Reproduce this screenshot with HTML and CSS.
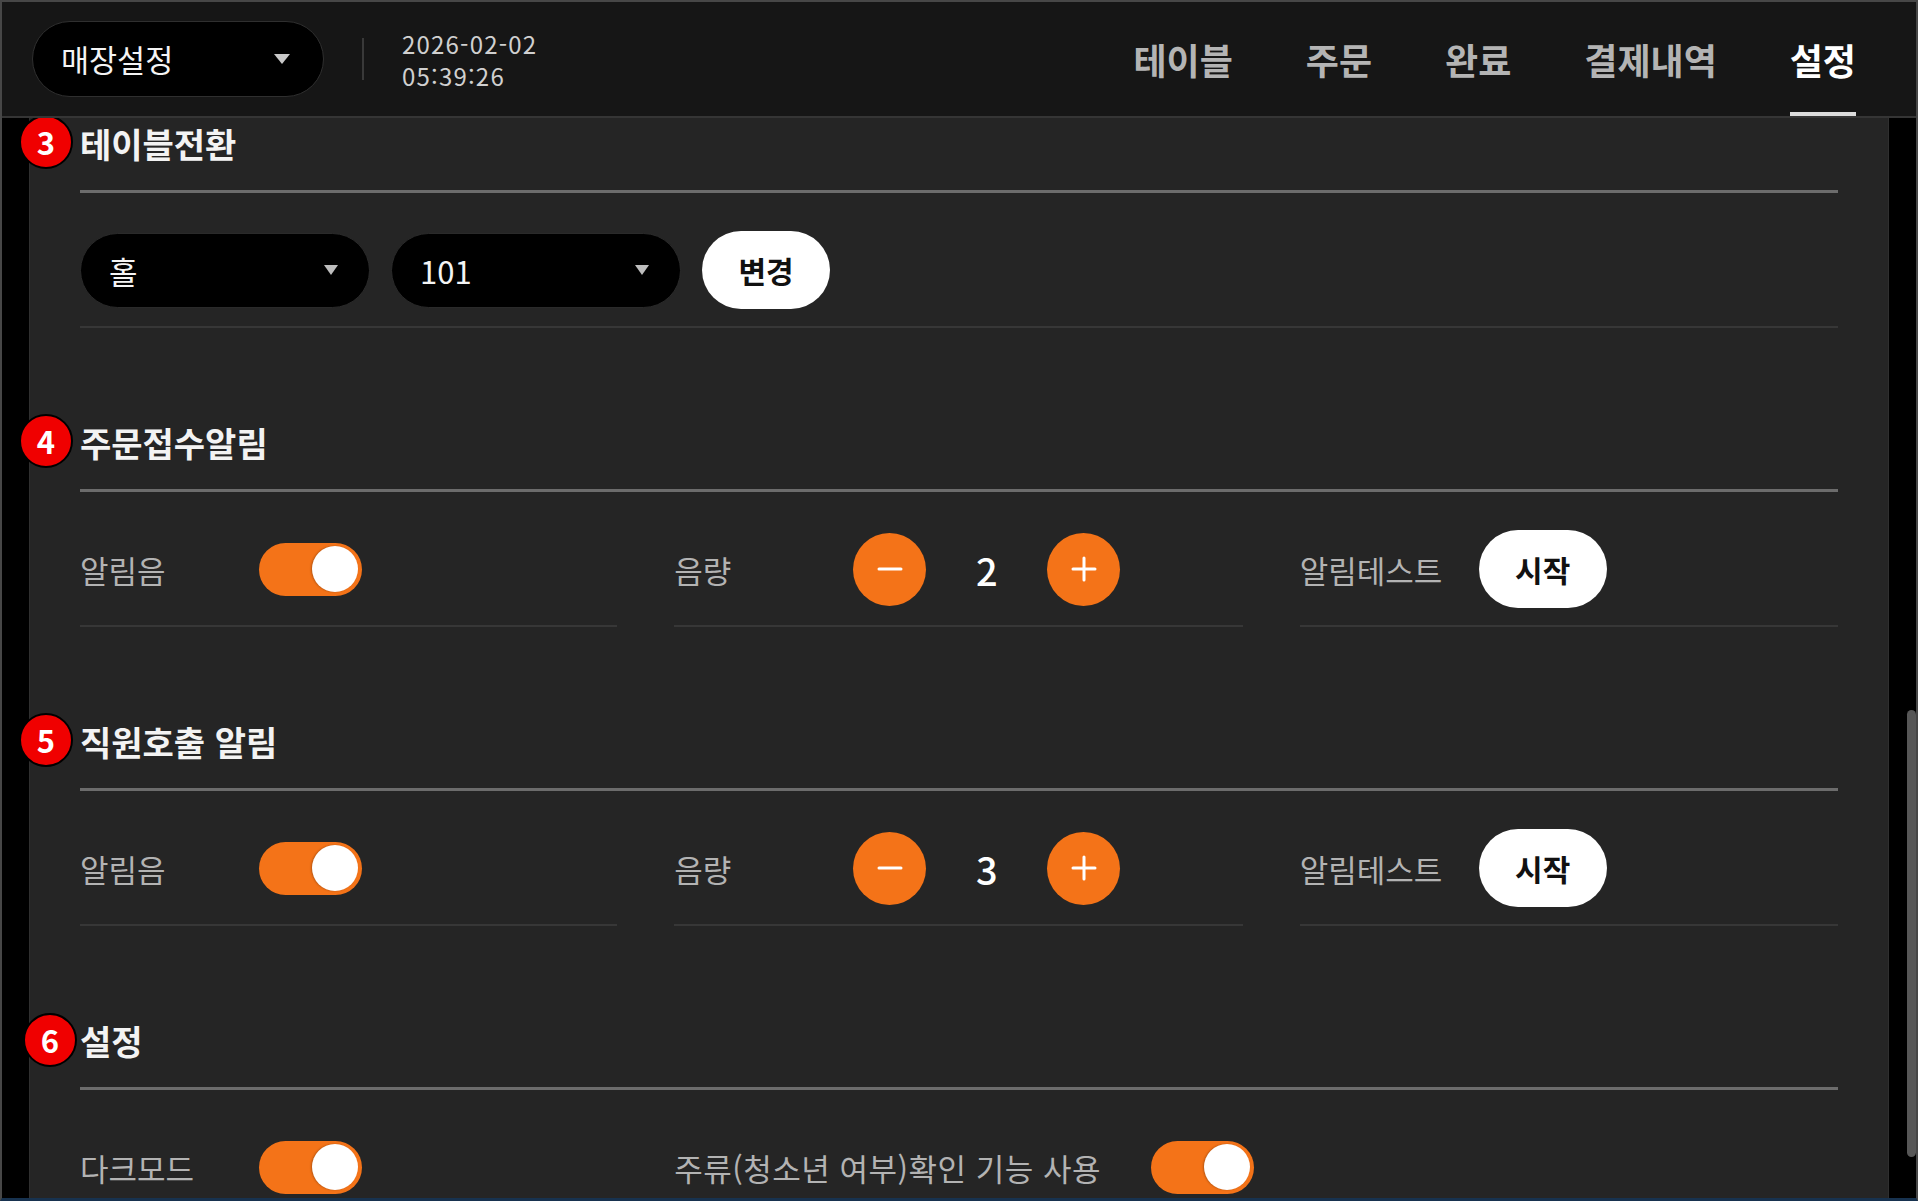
FILE: index.html
```html
<!DOCTYPE html>
<html lang="ko">
<head>
<meta charset="utf-8">
<title>설정</title>
<link rel="stylesheet" href="styles.css">
</head>
<body>
<div class="frame">
  <header class="topbar">
    <div class="store-select">
      <span>매장설정</span>
      <span class="caret"></span>
    </div>
    <div class="vsep"></div>
    <div class="clock">
      <div>2026-02-02</div>
      <div>05:39:26</div>
    </div>
    <nav class="tabs">
      <a class="tab">테이블</a>
      <a class="tab">주문</a>
      <a class="tab">완료</a>
      <a class="tab">결제내역</a>
      <a class="tab active">설정</a>
    </nav>
  </header>

  <div class="body">
    <div class="gutter-left"></div>
    <main class="panel">
      <section class="section">
        <h2 class="section-title"><span class="badge">3</span>테이블전환</h2>
        <div class="flat-row">
          <div class="select"><span>홀</span><span class="caret small"></span></div>
          <div class="select"><span>101</span><span class="caret small"></span></div>
          <button class="pill-btn">변경</button>
        </div>
      </section>

      <section class="section">
        <h2 class="section-title"><span class="badge">4</span>주문접수알림</h2>
        <div class="grid-row">
          <div class="cell">
            <span class="label">알림음</span>
            <span class="toggle"><span class="knob"></span></span>
          </div>
          <div class="cell">
            <span class="label">음량</span>
            <div class="stepper">
              <span class="round-btn"><svg width="26" height="26" viewBox="0 0 26 26"><path d="M2 13h22" stroke="#fff" stroke-width="3" stroke-linecap="round"/></svg></span>
              <span class="value">2</span>
              <span class="round-btn"><svg width="26" height="26" viewBox="0 0 26 26"><path d="M2 13h22M13 2v22" stroke="#fff" stroke-width="3" stroke-linecap="round"/></svg></span>
            </div>
          </div>
          <div class="cell">
            <span class="label">알림테스트</span>
            <button class="pill-btn">시작</button>
          </div>
        </div>
      </section>

      <section class="section">
        <h2 class="section-title"><span class="badge">5</span>직원호출 알림</h2>
        <div class="grid-row">
          <div class="cell">
            <span class="label">알림음</span>
            <span class="toggle"><span class="knob"></span></span>
          </div>
          <div class="cell">
            <span class="label">음량</span>
            <div class="stepper">
              <span class="round-btn"><svg width="26" height="26" viewBox="0 0 26 26"><path d="M2 13h22" stroke="#fff" stroke-width="3" stroke-linecap="round"/></svg></span>
              <span class="value">3</span>
              <span class="round-btn"><svg width="26" height="26" viewBox="0 0 26 26"><path d="M2 13h22M13 2v22" stroke="#fff" stroke-width="3" stroke-linecap="round"/></svg></span>
            </div>
          </div>
          <div class="cell">
            <span class="label">알림테스트</span>
            <button class="pill-btn">시작</button>
          </div>
        </div>
      </section>

      <section class="section">
        <h2 class="section-title"><span class="badge badge-shift">6</span>설정</h2>
        <div class="grid-row">
          <div class="cell">
            <span class="label">다크모드</span>
            <span class="toggle"><span class="knob"></span></span>
          </div>
          <div class="cell">
            <span class="label label-long">주류(청소년 여부)확인 기능 사용</span>
            <span class="toggle"><span class="knob"></span></span>
          </div>
          <div class="cell"></div>
        </div>
      </section>
    </main>
    <div class="gutter-right"><div class="thumb"></div></div>
  </div>
</div>
</body>
</html>
```

FILE: styles.css
```css
html, body {
  margin: 0;
  padding: 0;
  background: #000;
}

.frame {
  width: 1918px;
  height: 1201px;
  box-sizing: border-box;
  border: 2px solid #474747;
  border-bottom: 3px solid #17324f;
  display: flex;
  flex-direction: column;
  overflow: hidden;
  font-family: "Noto Sans CJK KR", "Noto Sans", sans-serif;
  color: #fff;
}

/* ---------- header ---------- */
.topbar {
  height: 116px;
  flex: none;
  box-sizing: border-box;
  background: #161616;
  border-bottom: 2px solid #353535;
  display: flex;
  align-items: center;
  padding: 0 60px 0 30px;
}

.store-select {
  width: 292px;
  height: 76px;
  box-sizing: border-box;
  background: #000;
  border: 1px solid #2f2f2f;
  border-radius: 38px;
  display: flex;
  align-items: center;
  justify-content: space-between;
  padding: 0 33px 0 28px;
  font-size: 30.5px;
  color: #f4f4f4;
}

.caret {
  width: 0;
  height: 0;
  border-left: 8px solid transparent;
  border-right: 8px solid transparent;
  border-top: 10px solid #c9c9c9;
}

.caret.small {
  border-left-width: 7.5px;
  border-right-width: 7.5px;
  border-top: 10px solid #bdbdbd;
}

.vsep {
  width: 2px;
  height: 42px;
  background: #393939;
  margin: 0 38px 0 38px;
}

.clock {
  font-size: 24px;
  line-height: 32px;
  letter-spacing: 1.2px;
  color: #d0d0d0;
  padding-top: 2px;
}

.tabs {
  margin-left: auto;
  align-self: stretch;
  display: flex;
  gap: 73px;
}

.tab {
  display: flex;
  align-items: center;
  box-sizing: border-box;
  padding-top: 4px;
  border-bottom: 4px solid transparent;
  font-size: 36px;
  font-weight: 700;
  color: #b4b4b4;
}

.tab.active {
  color: #fff;
  border-bottom-color: #dcdcdc;
}

/* ---------- body ---------- */
.body {
  flex: 1;
  min-height: 0;
  display: flex;
  overflow: hidden;
}

.gutter-left {
  width: 27px;
  flex: none;
  background: #000;
  border-right: 1px solid #2f2f2f;
}

.panel {
  flex: 1;
  background: #252525;
  padding: 4px 50px 0 50px;
  box-sizing: border-box;
}

.gutter-right {
  width: 28px;
  flex: none;
  background: #000;
  border-left: 1px solid #2f2f2f;
  box-sizing: border-box;
  display: flex;
  justify-content: flex-end;
}

.thumb {
  width: 9px;
  height: 447px;
  margin-top: 592px;
  background: #575757;
  border-radius: 5px;
}

/* ---------- sections ---------- */
.section {
  margin-bottom: 93px;
}

.section-title {
  position: relative;
  margin: 0;
  font-size: 34px;
  font-weight: 700;
  line-height: 44px;
  color: #f3f3f3;
  padding-bottom: 24px;
  border-bottom: 3px solid #6c6c6c;
}

.badge {
  position: absolute;
  left: -61px;
  top: -7px;
  width: 50px;
  height: 50px;
  border: 2px solid #000;
  border-radius: 50%;
  background: #f00000;
  color: #fff;
  font-size: 31px;
  font-weight: 700;
  line-height: 50px;
  text-align: center;
}

.badge.badge-shift {
  left: -57px;
  top: -6px;
}

.flat-row {
  margin-top: 21px;
  height: 112px;
  border-bottom: 2px solid #373737;
  display: flex;
  align-items: center;
  gap: 21px;
}

.select {
  width: 290px;
  height: 75px;
  box-sizing: border-box;
  background: #000;
  border: 1px solid #2a2a2a;
  border-radius: 38px;
  display: flex;
  align-items: center;
  justify-content: space-between;
  padding: 0 31px 0 28px;
  font-size: 31px;
  color: #f4f4f4;
}

.pill-btn {
  flex: none;
  width: 128px;
  height: 78px;
  border: none;
  border-radius: 39px;
  background: #fff;
  color: #111;
  font-family: inherit;
  font-size: 30px;
  font-weight: 700;
  padding: 0;
}

.grid-row {
  margin-top: 21px;
  display: grid;
  grid-template-columns: 537fr 568fr 538fr;
  column-gap: 57px;
}

.cell {
  height: 112px;
  border-bottom: 2px solid #373737;
  display: flex;
  align-items: center;
  min-width: 0;
}

.label {
  flex: none;
  min-width: 179px;
  font-size: 31px;
  color: #b3b3b3;
  white-space: nowrap;
}

.label.label-long {
  width: 477px;
  letter-spacing: 0.5px;
}

.toggle {
  flex: none;
  width: 103px;
  height: 53px;
  box-sizing: border-box;
  border-radius: 27px;
  background: #f47318;
  display: flex;
  align-items: center;
  justify-content: flex-end;
  padding-right: 4px;
}

.knob {
  width: 46px;
  height: 46px;
  border-radius: 50%;
  background: #fff;
  box-shadow: -1px 0 2px rgba(0, 0, 0, 0.25);
}

.stepper {
  display: flex;
  align-items: center;
}

.round-btn {
  width: 73px;
  height: 73px;
  border-radius: 50%;
  background: #f47318;
  display: flex;
  align-items: center;
  justify-content: center;
}

.value {
  width: 121px;
  text-align: center;
  font-size: 38px;
  font-weight: 500;
  color: #fff;
}
```
